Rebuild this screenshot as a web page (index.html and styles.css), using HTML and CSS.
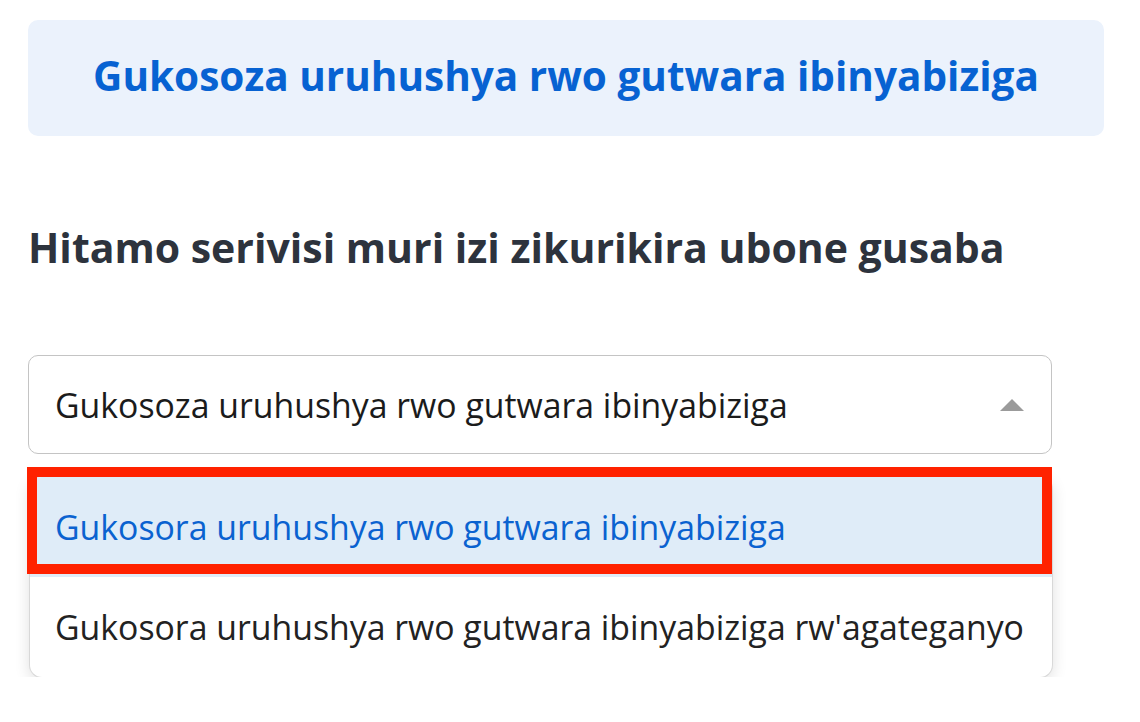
FILE: index.html
```html
<!DOCTYPE html>
<html lang="rw">
<head>
<meta charset="utf-8">
<link rel="stylesheet" href="styles.css">
</head>
<body>
<div class="page">
  <div class="banner"><h1 class="banner-title">Gukosoza uruhushya rwo gutwara ibinyabiziga</h1></div>
  <h2 class="prompt">Hitamo serivisi muri izi zikurikira ubone gusaba</h2>
  <div class="select-wrap">
    <div class="select">
      <span class="select-value">Gukosoza uruhushya rwo gutwara ibinyabiziga</span>
      <svg class="caret" width="24" height="12" viewBox="0 0 24 12"><polygon points="12,0 24,12 0,12" fill="#9b9b9b"/></svg>
    </div>
    <div class="menu">
      <div class="option option-active">Gukosora uruhushya rwo gutwara ibinyabiziga</div>
      <div class="option">Gukosora uruhushya rwo gutwara ibinyabiziga rw'agateganyo</div>
    </div>
    <div class="highlight"></div>
  </div>
</div>
</body>
</html>
```
FILE: styles.css
```css
html, body { margin: 0; padding: 0; background: #fff; }
body { font-family: "Open Sans", "Noto Sans", sans-serif; }
.page { padding: 20px 36px 0 28px; }
.banner {
  width: 1076px;
  height: 116px;
  box-sizing: border-box;
  background: #ebf2fc;
  border-radius: 10px;
  display: flex;
  align-items: center;
  justify-content: center;
  padding-bottom: 5px;
}
.banner-title {
  margin: 0;
  color: #0762d2;
  font-size: 40.5px;
  font-weight: 700;
  line-height: 50px;
}
.prompt {
  margin: 87px 0 0 0;
  color: #2d333d;
  font-size: 41px;
  font-weight: 700;
  line-height: 48px;
}
.select-wrap { position: relative; margin-top: 84px; width: 1024px; }
.select {
  height: 99px;
  box-sizing: border-box;
  border: 1.5px solid #c4c4c4;
  border-radius: 10px;
  display: flex;
  align-items: center;
  justify-content: space-between;
  padding: 0 27px 0 26px;
  font-size: 33.8px;
  color: #1b1b1b;
}
.menu {
  margin: 23px 0 0 2px;
  width: 1022px;
  background: #fff;
  border-radius: 12px;
  box-shadow: 0 4px 16px rgba(0,0,0,0.14), 0 0 0 1px rgba(0,0,0,0.09);
  overflow: hidden;
}
.option {
  height: 100px;
  display: flex;
  align-items: center;
  padding-left: 25px;
  font-size: 33.8px;
  color: #222;
}
.option-active { background: #dfecf8; color: #0a62d0; }
.highlight {
  position: absolute;
  left: -1px;
  top: 112px;
  width: 1025px;
  height: 107px;
  box-sizing: border-box;
  border: 10px solid #ff2200;
}
```
